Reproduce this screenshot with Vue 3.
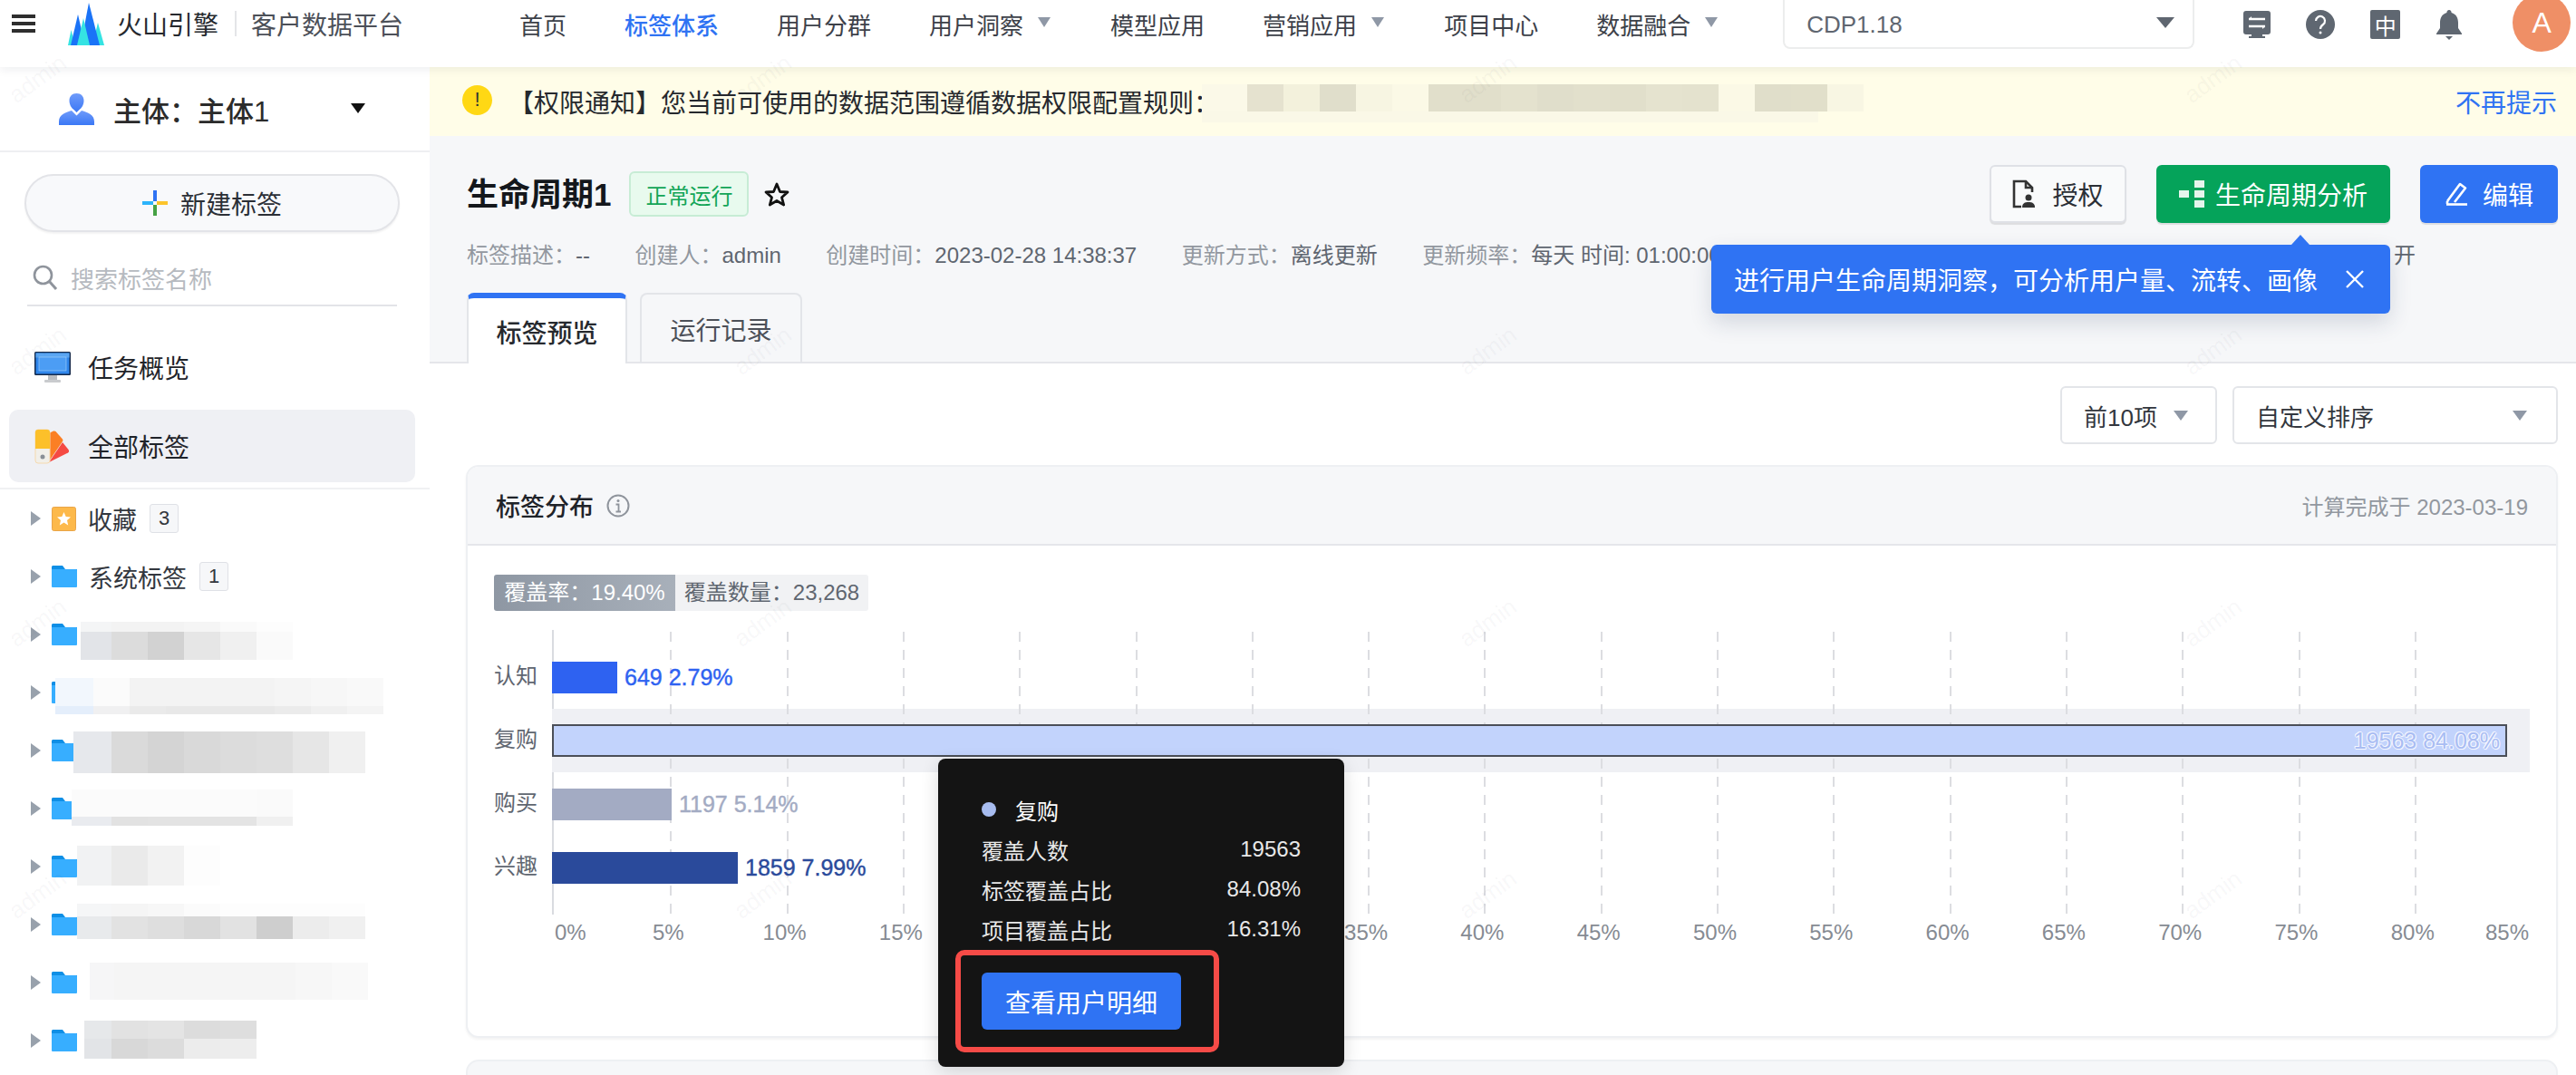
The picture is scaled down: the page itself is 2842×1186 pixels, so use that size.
<template>
  <div class="page">
    <header class="topbar">
      <div class="burger"><i></i><i></i><i></i></div>
      <svg class="logo" viewBox="0 0 40 47">
        <path d="M0 47L3.5 30L8 47Z" fill="#35e3e3" />
        <path d="M27 47L33 22L40 47Z" fill="#35e3e3" />
        <path d="M3 47L11 13L19 47Z" fill="#1a73f7" />
        <path d="M14 47L23 0L35 47Z" fill="#1a73f7" />
        <path d="M10 47L17 17L24 47Z" fill="#35e3e3" />
      </svg>
      <span class="brand">火山引擎</span>
      <span class="brand-line"></span>
      <span class="brand-sub">客户数据平台</span>
      <nav class="nav">
        <span v-for="item in navItems" :key="item.name" class="nav-item" :class="{ active: item.active }">
          {{ item.name }}<i v-if="item.caret" class="nav-caret"></i>
        </span>
      </nav>
      <div class="version">
        <span>CDP1.18</span>
        <i class="version-caret"></i>
      </div>
      <div class="tools">
        <svg width="30" height="30" viewBox="0 0 30 30">
          <path d="M3 0H27a3 3 0 0 1 3 3V23a3 3 0 0 1-3 3H21V28H24V30H6V28H9V26H3a3 3 0 0 1-3-3V3a3 3 0 0 1 3-3Z" fill="#5f6771" />
          <path d="M6 9H24M6 17H24" stroke="#fff" stroke-width="2.4" />
          <path d="M9 6L6 9L9 9ZM21 20L24 17L21 17Z" fill="#fff" />
        </svg>
        <svg width="32" height="32" viewBox="0 0 32 32">
          <circle cx="16" cy="16" r="16" fill="#5f6771" />
          <path d="M11 12a5 5 0 1 1 8 4c-2 1.500-3 2.500-3 5" fill="none" stroke="#fff" stroke-width="2.200" />
          <circle cx="16" cy="25" r="1.500" fill="#fff" />
        </svg>
        <span class="lang">中</span>
        <svg width="30" height="33" viewBox="0 0 30 33">
          <path d="M15 0a2.500 2.500 0 0 1 2.500 3C23 4.500 25 9 25 14V20L29 26V27H1V26L5 20V14C5 9 7 4.500 12.500 3A2.500 2.500 0 0 1 15 0Z" fill="#5f6771" />
          <path d="M11 29H19L15 33Z" fill="#5f6771" />
        </svg>
      </div>
      <span class="avatar">A</span>
    </header>

    <div class="layout">
      <aside class="side">
        <div class="subject">
          <svg class="subject-icon" width="39" height="35" viewBox="0 0 39 35">
            <defs>
              <linearGradient id="personFill" x1="0" y1="0" x2="0" y2="1">
                <stop offset="0" stop-color="#6f9bfa" />
                <stop offset="1" stop-color="#3b78f5" />
              </linearGradient>
            </defs>
            <path d="M19.500 0C24.500 0 27.500 3.500 27.500 8C27.500 12.500 25 16.500 22.500 18L19.500 21L16.500 18C14 16.500 11.500 12.500 11.500 8C11.500 3.500 14.500 0 19.500 0Z" fill="url(#personFill)" />
            <path d="M14 19L19.500 24.500L25 19C32 21 39 23.500 39 31V35H0V31C0 23.500 7 21 14 19Z" fill="url(#personFill)" />
          </svg>
          <span class="subject-name">主体：主体1</span>
          <i class="subject-caret"></i>
        </div>
        <button class="new-tag">
          <svg width="28" height="28" viewBox="0 0 28 28">
            <rect x="12" y="0" width="4" height="12" fill="#2f73f3" />
            <rect x="0" y="12" width="12" height="4" fill="#2db4fb" />
            <rect x="16" y="12" width="12" height="4" fill="#fcc42b" />
            <rect x="12" y="16" width="4" height="12" fill="#46a245" />
          </svg>
          新建标签
        </button>
        <div class="search">
          <svg width="28" height="28" viewBox="0 0 28 28">
            <circle cx="11.500" cy="11.500" r="9.500" fill="none" stroke="#8f949c" stroke-width="2.600" />
            <path d="M18.500 18.500L26 27" stroke="#8f949c" stroke-width="3" />
          </svg>
          <span>搜索标签名称</span>
        </div>
        <div class="side-link">
          <svg width="40" height="35" viewBox="0 0 40 35">
            <rect x="0" y="0" width="40" height="26" rx="1.500" fill="#14294a" />
            <rect x="1.500" y="1.500" width="37" height="23" fill="#2f86ec" />
            <rect x="1.500" y="1.500" width="37" height="5" fill="#5aa6f2" />
            <rect x="5" y="6" width="30" height="15" fill="#4c9df4" stroke="#a9d2f9" stroke-width=".6" />
            <rect x="15" y="26" width="10" height="5" fill="#b9bcc0" />
            <rect x="11" y="31" width="18" height="3" rx="1" fill="#c9cbce" />
          </svg>
          <span>任务概览</span>
        </div>
        <div class="side-link current">
          <svg width="40" height="39" viewBox="0 0 40 39">
            <path d="M16 5L21 2.500C22 2.200 23 2.500 23.500 3L31 11.500C31.500 12.500 31.500 13 31 14L16 36Z" fill="#fb7f24" />
            <path d="M31 15L37.500 23C38.500 24.500 38 26 37 26.500L16 37Z" fill="#f54a43" />
            <rect x="1" y="1" width="16" height="37" rx="3" fill="#f1efe9" stroke="#f5d9ad" />
            <path d="M1 4a3 3 0 0 1 3-3H14a3 3 0 0 1 3 3V22H1Z" fill="#fcc02a" />
            <circle cx="9" cy="31" r="2.500" fill="#8a8f96" />
          </svg>
          <span>全部标签</span>
        </div>
        <div class="tree">
          <div v-for="row in treeRows" :key="row.id" class="tree-row">
            <i class="tree-caret"></i>
            <svg v-if="row.star" class="tree-icon" width="27" height="27" viewBox="0 0 27 27">
              <rect x=".5" y=".5" width="26" height="26" rx="2" fill="#fdb94a" stroke="#e9a549" />
              <path d="M13.500 6L15.700 11L21 11.500L17 15L18.200 20.500L13.500 17.600L8.800 20.500L10 15L6 11.500L11.300 11Z" fill="#fff" />
            </svg>
            <svg v-else class="tree-icon" width="28" height="24" viewBox="0 0 28 24">
              <path d="M1 0H12L15 4H28V6H0V1Z" fill="#0f8fe6" />
              <path d="M0 4H27a1 1 0 0 1 1 1V23a1 1 0 0 1-1 1H1a1 1 0 0 1-1-1Z" fill="#37aeff" />
            </svg>
            <template v-if="row.name">
              <span class="tree-name">{{ row.name }}</span>
              <span class="tree-count">{{ row.count }}</span>
            </template>
            <div v-else class="side-mosaic" :style="{ marginLeft: row.left + 'px', marginTop: row.top + 'px' }">
              <div
                v-for="(strip, s) in row.strips"
                :key="s"
                class="strip"
                :style="{ height: strip.h + 'px' }"
              >
                <span
                  v-for="(c, i) in strip.cells"
                  :key="i"
                  :style="{ background: c, width: (i === 0 ? row.first : 40) + 'px' }"
                ></span>
              </div>
            </div>
          </div>
        </div>
      </aside>

      <main class="main">
        <div class="notice">
          <span class="notice-icon">!</span>
          <span class="notice-text">【权限通知】您当前可使用的数据范围遵循数据权限配置规则：</span>
          <div class="notice-mosaic">
            <div class="strip main-strip">
              <span
                v-for="(c, i) in noticeCells"
                :key="i"
                :style="{ background: c, width: (i === 0 ? 50 : 40) + 'px' }"
              ></span>
            </div>
            <div class="strip low-strip"></div>
          </div>
          <a class="notice-close">不再提示</a>
        </div>

        <section class="head">
          <div class="title-row">
            <h1 class="title">生命周期1</h1>
            <span class="status">正常运行</span>
            <svg class="star" width="28" height="27" viewBox="0 0 28 27">
              <path d="M14 2L17.500 10.500L26 11L19.500 16.800L21.700 25L14 20.500L6.300 25L8.500 16.800L2 11L10.500 10.500Z" fill="none" stroke="#111" stroke-width="2.800" stroke-linejoin="round" />
            </svg>
            <div class="actions">
              <button class="btn plain">
                <svg width="26" height="32" viewBox="0 0 26 32">
                  <path d="M10 30H2V2H15L22 9V14" fill="none" stroke="#333" stroke-width="2.600" />
                  <path d="M15 2V9H22" fill="none" stroke="#333" stroke-width="2.600" />
                  <circle cx="18" cy="20" r="3.500" fill="#333" />
                  <path d="M11 31C11 26 14 25 18 25C22 25 25 26 25 31Z" fill="#333" />
                </svg>
                授权
              </button>
              <button class="btn green">
                <span class="life-icon">
                  <i class="life-left"></i>
                  <span class="life-col"><i></i><i></i><i></i></span>
                </span>
                生命周期分析
              </button>
              <button class="btn blue">
                <svg width="28" height="28" viewBox="0 0 28 28">
                  <path d="M3 22L17 3L23 7.500L11 23" fill="none" stroke="#fff" stroke-width="2.600" stroke-linejoin="round" />
                  <path d="M2 25.500H25" stroke="#fff" stroke-width="2.600" />
                  <path d="M3 22V25" stroke="#fff" stroke-width="2.600" />
                </svg>
                编辑
              </button>
            </div>
          </div>
          <div class="meta">
            <span v-for="m in metaItems" :key="m.label" class="meta-item">
              {{ m.label }}：<em>{{ m.value }}</em>
            </span>
            <span class="meta-end">开</span>
          </div>
          <div class="tabs">
            <span class="tab on">标签预览</span>
            <span class="tab">运行记录</span>
          </div>
          <div class="guide">
            <i class="guide-arrow"></i>
            <span>进行用户生命周期洞察，可分析用户量、流转、画像</span>
            <svg width="22" height="22" viewBox="0 0 22 22">
              <path d="M2 2L20 20M20 2L2 20" stroke="#fff" stroke-width="2.400" />
            </svg>
          </div>
        </section>

        <section class="content">
          <div class="filters">
            <div class="select small">
              <span>前10项</span>
              <i></i>
            </div>
            <div class="select wide">
              <span>自定义排序</span>
              <i></i>
            </div>
          </div>

          <div class="card">
            <div class="card-head">
              <span class="card-title">标签分布</span>
              <svg width="26" height="26" viewBox="0 0 26 26">
                <circle cx="13" cy="13" r="11.500" fill="none" stroke="#8f949c" stroke-width="2" />
                <circle cx="13" cy="7.500" r="1.500" fill="#8f949c" />
                <path d="M10.500 11.500H13.500V19M10.500 19.500H16" fill="none" stroke="#8f949c" stroke-width="1.800" />
              </svg>
              <span class="card-time">计算完成于 2023-03-19</span>
            </div>
            <div class="summary">
              <span class="rate">覆盖率：19.40%</span>
              <span class="amount">覆盖数量：23,268</span>
            </div>
            <div class="plot">
              <div class="plot-labels">
                <span v-for="b in bars" :key="b.name">{{ b.name }}</span>
              </div>
              <div class="plot-area">
                <i
                  v-for="n in 16"
                  :key="n"
                  class="grid-line"
                  :style="{ left: (n * tickWidth).toFixed(1) + 'px' }"
                ></i>
                <div v-for="b in bars" :key="b.name" class="bar-row" :class="{ hover: b.hover }">
                  <div
                    class="bar"
                    :style="{ width: barWidth(b.percent) + 'px', background: b.color }"
                  >
                    <span v-if="b.hover" class="bar-inside">{{ b.count }} {{ b.percent }}%</span>
                  </div>
                  <span v-if="!b.hover" class="bar-value" :style="{ color: b.color }">{{ b.count }} {{ b.percent }}%</span>
                </div>
              </div>
            </div>
            <div class="ticks">
              <span v-for="t in ticks" :key="t" class="tick">{{ t }}%</span>
            </div>
          </div>

          <div class="card-next"></div>

          <div class="tip">
            <div class="tip-title"><i></i>复购</div>
            <div v-for="r in tipRows" :key="r.label" class="tip-row">
              <span>{{ r.label }}</span>
              <span>{{ r.value }}</span>
            </div>
            <div class="tip-frame">
              <button class="tip-btn">查看用户明细</button>
            </div>
          </div>
        </section>
      </main>
    </div>

    <div class="marks">
      <span v-for="n in 16" :key="n" class="mark-cell"><b>admin</b></span>
    </div>
  </div>
</template>

<script setup>
const navItems = [
  { name: "首页" },
  { name: "标签体系", active: true },
  { name: "用户分群" },
  { name: "用户洞察", caret: true },
  { name: "模型应用" },
  { name: "营销应用", caret: true },
  { name: "项目中心" },
  { name: "数据融合", caret: true },
];

const treeRows = [
  { id: 1, name: "收藏", count: 3, star: true },
  { id: 2, name: "系统标签", count: 1 },
  {
    id: 3, left: 4, top: 18, first: 34,
    strips: [
      { h: 11, cells: ["#f4f5f6", "#f3f3f3", "#f3f3f3", "#f5f5f5", "#fafafa", "#fdfdfd"] },
      { h: 31, cells: ["#e2e4e8", "#dcdcdc", "#d2d2d2", "#e6e6e6", "#f0f0f0", "#fafafa"] },
    ],
  },
  {
    id: 4, left: -24, top: 16, first: 42,
    strips: [
      { h: 31, cells: ["#f2f7fd", "#fbfbfb", "#f3f3f3", "#f3f3f3", "#f3f3f3", "#f3f3f3", "#f5f5f5", "#f7f7f7", "#f9f9f9"] },
      { h: 9, cells: ["#e4eefb", "#f0f0f1", "#eaeaea", "#e8e8e8", "#e8e8e8", "#e8e8e8", "#ebebeb", "#f0f0f0", "#f4f4f4"] },
    ],
  },
  {
    id: 5, left: -4, top: 11, first: 42,
    strips: [
      { h: 46, cells: ["#e6e8ec", "#dadada", "#d4d4d4", "#d9d9d9", "#dcdcdc", "#dedede", "#e6e6e6", "#f0f0f0"] },
    ],
  },
  {
    id: 6, left: -6, top: 11, first: 44,
    strips: [
      { h: 30, cells: ["#fbfbfb", "#fbfbfb", "#fbfbfb", "#fbfbfb", "#fbfbfb", "#fafafa"] },
      { h: 10, cells: ["#e9ebef", "#e2e2e2", "#e3e3e3", "#e3e3e3", "#e4e4e4", "#f0f0f0"] },
    ],
  },
  {
    id: 7, left: 0, top: 9, first: 38,
    strips: [
      { h: 44, cells: ["#f1f2f3", "#eaeaea", "#f2f2f2", "#fdfdfd"] },
    ],
  },
  {
    id: 8, left: 0, top: 9, first: 38,
    strips: [
      { h: 14, cells: ["#f5f6f7", "#f5f5f5", "#f7f7f7", "#fbfbfb", "#fdfdfd", "#fdfdfd", "#fdfdfd", "#fdfdfd"] },
      { h: 25, cells: ["#e8eaec", "#e2e2e2", "#dedede", "#d8d8d8", "#e2e2e2", "#cecece", "#ececec", "#f0f0f0"] },
    ],
  },
  {
    id: 9, left: 14, top: 10, first: 27,
    strips: [
      { h: 41, cells: ["#f6f6f7", "#f5f5f5", "#f5f5f5", "#f5f5f5", "#f5f5f5", "#f5f5f5", "#f7f7f7", "#f9f9f9"] },
    ],
  },
  {
    id: 10, left: 8, top: 10, first: 30,
    strips: [
      { h: 20, cells: ["#e6e8ea", "#e2e2e2", "#e4e4e4", "#dcdcdc", "#dedede"] },
      { h: 22, cells: ["#e2e4e7", "#d8d8d8", "#dcdcdc", "#ececec", "#ededed"] },
    ],
  },
];

const noticeCells = [
  "#fbf9e8", "#e5e2cf", "#f3f1dc", "#e0decb", "#f7f5e2", "#fbf9e6",
  "#e1dfcb", "#e1dfcb", "#e4e2ce", "#e0decb", "#e2e0cc", "#e1dfcb",
  "#e5e3cf", "#e4e2ce", "#fbf9e6", "#e0deca", "#e1dfca", "#f8f6e3",
];

const metaItems = [
  { label: "标签描述", value: "--" },
  { label: "创建人", value: "admin" },
  { label: "创建时间", value: "2023-02-28 14:38:37" },
  { label: "更新方式", value: "离线更新" },
  { label: "更新频率", value: "每天 时间: 01:00:00" },
];

const tickWidth = 128.3;
const ticks = Array.from({ length: 18 }, (_, i) => i * 5);

const bars = [
  { name: "认知", count: 649, percent: 2.79, color: "#2e62f1" },
  { name: "复购", count: 19563, percent: 84.08, color: "#c2d3fc", hover: true },
  { name: "购买", count: 1197, percent: 5.14, color: "#a3abc3" },
  { name: "兴趣", count: 1859, percent: 7.99, color: "#2a4a9b" },
];

const barWidth = (percent) => Math.round((percent / 5) * tickWidth);

const tipRows = [
  { label: "覆盖人数", value: "19563" },
  { label: "标签覆盖占比", value: "84.08%" },
  { label: "项目覆盖占比", value: "16.31%" },
];
</script>

<style>
html,
body {
  margin: 0;
  overflow: hidden;
  background: #fff;
}
</style>

<style scoped>
.page {
  position: relative;
  width: 2842px;
  height: 1186px;
  overflow: hidden;
  display: flex;
  flex-direction: column;
  font-family: "Liberation Sans", "Noto Sans CJK SC", sans-serif;
  color: #2b2f36;
}
i {
  display: block;
}

/* top bar */
.topbar {
  position: relative;
  z-index: 3;
  height: 74px;
  flex: none;
  display: flex;
  align-items: center;
  padding: 0 0 22px 13px;
  box-sizing: border-box;
  background: #fff;
  box-shadow: 0 3px 10px rgba(20, 30, 50, 0.07);
}
.burger {
  width: 26px;
  display: flex;
  flex-direction: column;
  gap: 4px;
}
.burger i {
  height: 4px;
  background: #2e2e2e;
}
.logo {
  width: 40px;
  height: 47px;
  margin-left: 36px;
  flex: none;
}
.brand {
  margin-left: 14px;
  font-size: 28px;
  color: #26292e;
}
.brand-line {
  width: 2px;
  height: 28px;
  margin: 0 16px 0 18px;
  background: #e4e5e8;
}
.brand-sub {
  font-size: 28px;
  color: #4c5058;
}
.nav {
  display: flex;
  gap: 64px;
  margin-left: 128px;
  font-size: 26px;
  color: #3d4149;
}
.nav-item {
  display: flex;
  align-items: center;
  white-space: nowrap;
}
.nav-item.active {
  color: #2f73f3;
  font-weight: 500;
}
.nav-caret {
  width: 0;
  height: 0;
  margin: -4px 2px 0 16px;
  border: 7px solid transparent;
  border-top: 11px solid #8f98a6;
  border-bottom: 0;
}
.version {
  align-self: flex-start;
  width: 454px;
  height: 66px;
  margin: -12px 0 0 70px;
  padding: 14px 20px 0 24px;
  box-sizing: border-box;
  display: flex;
  align-items: center;
  justify-content: space-between;
  background: #fff;
  border: 2px solid #eceded;
  border-top: 0;
  border-radius: 0 0 8px 8px;
  font-size: 26px;
  color: #5f6670;
}
.version-caret {
  width: 0;
  height: 0;
  margin-top: -4px;
  border: 10px solid transparent;
  border-top: 12px solid #5f6670;
  border-bottom: 0;
}
.tools {
  display: flex;
  align-items: center;
  gap: 39px;
  margin-left: 54px;
  margin-top: 2px;
}
.lang {
  width: 33px;
  height: 32px;
  display: flex;
  align-items: center;
  justify-content: center;
  background: #5f6771;
  border-radius: 2px;
  color: #fff;
  font-size: 24px;
}
.avatar {
  width: 64px;
  height: 64px;
  margin: -2px 0 0 55px;
  display: flex;
  flex: none;
  align-items: center;
  justify-content: center;
  border-radius: 50%;
  background: #ef8f66;
  color: #fff;
  font-size: 32px;
}

.layout {
  flex: 1;
  min-height: 0;
  display: flex;
}

/* sidebar */
.side {
  width: 474px;
  flex: none;
  background: #fff;
  display: flex;
  flex-direction: column;
  overflow: hidden;
}
.subject {
  height: 92px;
  flex: none;
  display: flex;
  align-items: center;
  padding-left: 65px;
  border-bottom: 2px solid #eeeff2;
}
.subject-name {
  margin-left: 21px;
  font-size: 31px;
  font-weight: 500;
  color: #2b2b2b;
}
.subject-caret {
  width: 0;
  height: 0;
  margin: -2px 0 0 90px;
  border: 8px solid transparent;
  border-top: 11px solid #111;
  border-bottom: 0;
}
.new-tag {
  width: 414px;
  height: 64px;
  flex: none;
  margin: 24px 0 0 27px;
  display: flex;
  align-items: center;
  justify-content: center;
  gap: 14px;
  background: #f8f9fb;
  border: 2px solid #e3e4e8;
  border-radius: 32px;
  box-shadow: 0 2px 2px rgba(0, 0, 0, 0.05);
  font-family: inherit;
  font-size: 28px;
  color: #2b2f36;
}
.search {
  height: 82px;
  flex: none;
  box-sizing: border-box;
  margin: 0 36px 0 30px;
  padding: 20px 0 0 6px;
  display: flex;
  align-items: center;
  gap: 14px;
  border-bottom: 2px solid #e3e4e8;
  font-size: 26px;
  color: #b6bac0;
}
.side-link {
  height: 80px;
  flex: none;
  margin: 0 16px 0 10px;
  padding-left: 28px;
  box-sizing: border-box;
  display: flex;
  align-items: center;
  gap: 19px;
  border-radius: 10px;
  font-size: 28px;
  color: #1f2329;
}
.search + .side-link {
  margin-top: 28px;
  height: 78px;
}
.side-link.current {
  margin-top: 8px;
  background: #eff0f4;
}
.tree {
  flex: 1;
  margin-top: 6px;
  border-top: 2px solid #f0f1f3;
  box-sizing: border-box;
}
.tree-row {
  height: 64px;
  display: flex;
  align-items: center;
  padding-left: 34px;
}
.tree-caret {
  width: 0;
  height: 0;
  flex: none;
  border: 8px solid transparent;
  border-left: 11px solid #98a1ac;
  border-right: 0;
}
.tree-icon {
  margin-left: 12px;
  flex: none;
}
.tree-name {
  margin-left: 13px;
  font-size: 27px;
  color: #33373e;
}
.tree-count {
  width: 32px;
  height: 32px;
  margin-left: 14px;
  box-sizing: border-box;
  display: flex;
  align-items: center;
  justify-content: center;
  background: #f6f7f9;
  border: 1px solid #dfe1e6;
  border-radius: 3px;
  font-size: 22px;
  color: #33373e;
}
.side-mosaic {
  align-self: flex-start;
  position: relative;
  z-index: 1;
}
.strip {
  display: flex;
}
.strip span {
  flex: none;
  height: 100%;
}

/* main */
.main {
  flex: 1;
  min-width: 0;
  display: flex;
  flex-direction: column;
  position: relative;
}
.notice {
  height: 76px;
  flex: none;
  box-sizing: border-box;
  display: flex;
  align-items: center;
  padding: 0 21px 0 36px;
  background: #fffde8;
  font-size: 28px;
  color: #26292e;
}
.notice-icon {
  width: 33px;
  height: 33px;
  margin-top: -4px;
  flex: none;
  display: flex;
  align-items: center;
  justify-content: center;
  border-radius: 50%;
  background: #ffd814;
  font-size: 22px;
  color: #333;
}
.notice-text {
  margin-left: 18px;
  width: 765px;
  flex: none;
  white-space: nowrap;
}
.notice-mosaic {
  margin-top: 4px;
}
.main-strip {
  height: 30px;
}
.low-strip {
  height: 12px;
  width: 680px;
  background: #faf8e7;
}
.notice-close {
  margin-left: auto;
  color: #2f73f3;
}

.head {
  position: relative;
  height: 251px;
  flex: none;
  box-sizing: border-box;
  padding: 32px 20px 0 41px;
  background: #f6f7f9;
  border-bottom: 2px solid #e5e6ea;
  display: flex;
  flex-direction: column;
}
.title-row {
  height: 64px;
  display: flex;
  align-items: center;
}
.title {
  margin: 0;
  font-size: 35px;
  font-weight: 700;
  line-height: 1;
  color: #14171c;
}
.status {
  width: 132px;
  height: 50px;
  margin-left: 20px;
  box-sizing: border-box;
  display: flex;
  align-items: center;
  justify-content: center;
  background: #e8faee;
  border: 2px solid #c7ecd5;
  border-radius: 6px;
  font-size: 24px;
  color: #12a557;
}
.star {
  margin-left: 17px;
}
.actions {
  margin-left: auto;
  display: flex;
  gap: 33px;
}
.btn {
  height: 64px;
  padding: 0;
  display: flex;
  align-items: center;
  justify-content: center;
  gap: 14px;
  border-radius: 6px;
  font-family: inherit;
  font-size: 28px;
  box-sizing: border-box;
  box-shadow: 0 2px 1px rgba(0, 0, 0, 0.1);
}
.btn.plain {
  width: 151px;
  background: #f9fafb;
  border: 2px solid #dfe1e6;
  color: #2b2f36;
  gap: 18px;
}
.btn.green {
  width: 258px;
  background: #05a35a;
  border: 0;
  color: #fff;
  gap: 12px;
}
.btn.blue {
  width: 152px;
  background: #2f73f3;
  border: 0;
  color: #fff;
}
.life-icon {
  display: flex;
  align-items: center;
  gap: 6px;
}
.life-left {
  width: 11px;
  height: 8px;
  background: #e5f5ec;
}
.life-col {
  display: flex;
  flex-direction: column;
  gap: 3px;
}
.life-col i {
  width: 11px;
  height: 8px;
  background: #e5f5ec;
}
.meta {
  margin-top: 19px;
  height: 28px;
  display: flex;
  align-items: center;
  gap: 49.5px;
  font-size: 24px;
  color: #92979f;
  white-space: nowrap;
}
.meta em {
  font-style: normal;
  color: #5f6670;
}
.meta-end {
  margin-left: auto;
  margin-right: 157px;
  color: #5f6670;
}
.tabs {
  margin-top: 30px;
  display: flex;
  gap: 14px;
}
.tab {
  width: 179px;
  height: 78px;
  box-sizing: border-box;
  display: flex;
  align-items: center;
  justify-content: center;
  border: 2px solid #e3e5e9;
  border-bottom: 0;
  border-radius: 8px 8px 0 0;
  font-size: 28px;
  color: #4c5058;
}
.tab.on {
  width: 177px;
  height: 79px;
  margin-bottom: -1px;
  background: #fff;
  border-top: 6px solid #2f73f3;
  color: #26292e;
  font-weight: 500;
}
.guide {
  position: absolute;
  left: 1414px;
  top: 120px;
  z-index: 2;
  width: 749px;
  height: 76px;
  box-sizing: border-box;
  padding-left: 25px;
  display: flex;
  align-items: center;
  background: #2f73f3;
  border-radius: 6px;
  box-shadow: 0 10px 24px rgba(30, 50, 90, 0.16);
  font-size: 28px;
  color: #fff;
  white-space: nowrap;
}
.guide svg {
  margin-left: 30px;
}
.guide-arrow {
  position: absolute;
  top: -11px;
  left: 640px;
  width: 0;
  height: 0;
  border: 10px solid transparent;
  border-bottom: 11px solid #2f73f3;
  border-top: 0;
}

.content {
  position: relative;
  flex: 1;
  min-height: 0;
  background: #fff;
  padding: 25px 20px 0 40px;
}
.filters {
  display: flex;
  justify-content: flex-end;
  gap: 17px;
  height: 64px;
}
.select {
  box-sizing: border-box;
  height: 64px;
  display: flex;
  align-items: center;
  justify-content: space-between;
  padding: 0 24px;
  background: #fff;
  border: 2px solid #e3e5e9;
  border-radius: 6px;
  font-size: 26px;
  color: #33373e;
}
.select i {
  width: 0;
  height: 0;
  border: 8px solid transparent;
  border-top: 11px solid #8f98a6;
  border-bottom: 0;
}
.select.small {
  width: 173px;
  padding-right: 30px;
}
.select.wide {
  width: 359px;
  padding-right: 32px;
}

.card {
  margin-top: 23px;
  height: 632px;
  box-sizing: border-box;
  background: #fff;
  border: 2px solid #eef0f3;
  border-radius: 14px;
  box-shadow: 0 2px 3px rgba(0, 0, 0, 0.05);
}
.card-head {
  height: 87px;
  box-sizing: border-box;
  display: flex;
  align-items: center;
  gap: 14px;
  padding: 0 31px;
  background: #f6f7f9;
  border-bottom: 2px solid #e5e6ea;
  border-radius: 12px 12px 0 0;
}
.card-title {
  font-size: 27px;
  font-weight: 500;
  color: #1f2329;
}
.card-time {
  margin-left: auto;
  font-size: 24px;
  color: #92979f;
}
.summary {
  display: flex;
  margin: 32px 0 0 29px;
  height: 40px;
  font-size: 24px;
  line-height: 40px;
}
.rate {
  width: 200px;
  text-align: center;
  background: linear-gradient(90deg, #8e97a3, #a8b0ba);
  border-radius: 3px 0 0 3px;
  color: #fff;
}
.amount {
  width: 213px;
  text-align: center;
  background: #f1f2f4;
  border-radius: 0 3px 3px 0;
  color: #5f6670;
}
.plot {
  display: flex;
  margin: 21px 0 0 29px;
}
.plot-labels {
  width: 64px;
  padding-top: 17px;
  flex: none;
  display: flex;
  flex-direction: column;
}
.plot-labels span {
  height: 70px;
  line-height: 68px;
  font-size: 24px;
  color: #5f6670;
}
.plot-area {
  position: relative;
  width: 2182px;
  height: 314px;
  box-sizing: border-box;
  padding-top: 17px;
  border-left: 2px solid #d9dbe0;
}
.grid-line {
  position: absolute;
  top: 2px;
  bottom: 0;
  width: 2px;
  z-index: 1;
  background: repeating-linear-gradient(180deg, #dcdde1 0 11px, transparent 11px 20px);
}
.bar-row {
  height: 70px;
  display: flex;
  align-items: center;
  margin-left: -2px;
}
.bar-row.hover {
  background: #eff0f4;
}
.bar {
  position: relative;
  z-index: 2;
  height: 35px;
  box-sizing: border-box;
  flex: none;
}
.bar-row.hover .bar {
  height: 36px;
  border: 2px solid #4b4f58;
  display: flex;
  align-items: center;
  justify-content: flex-end;
  padding-right: 6px;
}
.bar-inside {
  font-size: 25px;
  color: #a9bdf3;
  text-shadow: 1px 0 0 #f4f6ff, -1px 0 0 #f4f6ff, 0 1px 0 #f4f6ff, 0 -1px 0 #f4f6ff, 1px 1px 0 #f4f6ff, -1px -1px 0 #f4f6ff;
}
.bar-value {
  position: relative;
  z-index: 2;
  margin-left: 8px;
  font-size: 25px;
  -webkit-text-stroke: 0.4px currentColor;
  white-space: nowrap;
}
.ticks {
  display: flex;
  margin: 0 0 0 93px;
  padding-top: 4px;
  width: 2181px;
  font-size: 24px;
  line-height: 32px;
  color: #868b93;
}
.tick {
  flex: 0 0 128.3px;
  text-align: center;
}
.tick:first-child {
  flex: 0 0 64.15px;
  box-sizing: border-box;
  text-align: left;
  padding-left: 3px;
}
.tick:last-child {
  flex: 0 0 64.15px;
  text-align: right;
}
.card-next {
  height: 60px;
  margin-top: 24px;
  background: #f6f7f9;
  border: 2px solid #eef0f3;
  border-radius: 14px 14px 0 0;
}
.tip {
  position: absolute;
  left: 561px;
  top: 436px;
  z-index: 4;
  width: 448px;
  height: 340px;
  box-sizing: border-box;
  padding: 34px 48px 0;
  background: #141414;
  border-radius: 8px;
  box-shadow: 0 6px 20px rgba(0, 0, 0, 0.14);
  font-size: 24px;
  color: #e8e8e8;
}
.tip-title {
  height: 44px;
  display: flex;
  align-items: center;
  gap: 21px;
  color: #fff;
}
.tip-title i {
  width: 16px;
  height: 16px;
  border-radius: 50%;
  background: #a7bcef;
}
.tip-row {
  height: 44px;
  display: flex;
  align-items: center;
  justify-content: space-between;
}
.tip-frame {
  width: 291px;
  height: 113px;
  margin: 1px 0 0 -29px;
  box-sizing: border-box;
  padding: 19px 0 0 23px;
  border: 6px solid #f64b47;
  border-radius: 10px;
}
.tip-btn {
  width: 220px;
  height: 63px;
  border: 0;
  background: #2f73f3;
  border-radius: 6px;
  font-family: inherit;
  font-size: 28px;
  color: #fff;
}

/* watermark */
.marks {
  position: absolute;
  left: 0;
  top: 71px;
  z-index: 5;
  display: grid;
  grid-template-columns: repeat(4, 800px);
  grid-auto-rows: 300px;
  pointer-events: none;
}
.mark-cell b {
  display: block;
  width: 70px;
  margin-left: 6px;
  font-weight: 400;
  font-size: 26px;
  line-height: 32px;
  color: rgba(40, 50, 70, 0.05);
  transform: rotate(-36deg);
}
</style>
